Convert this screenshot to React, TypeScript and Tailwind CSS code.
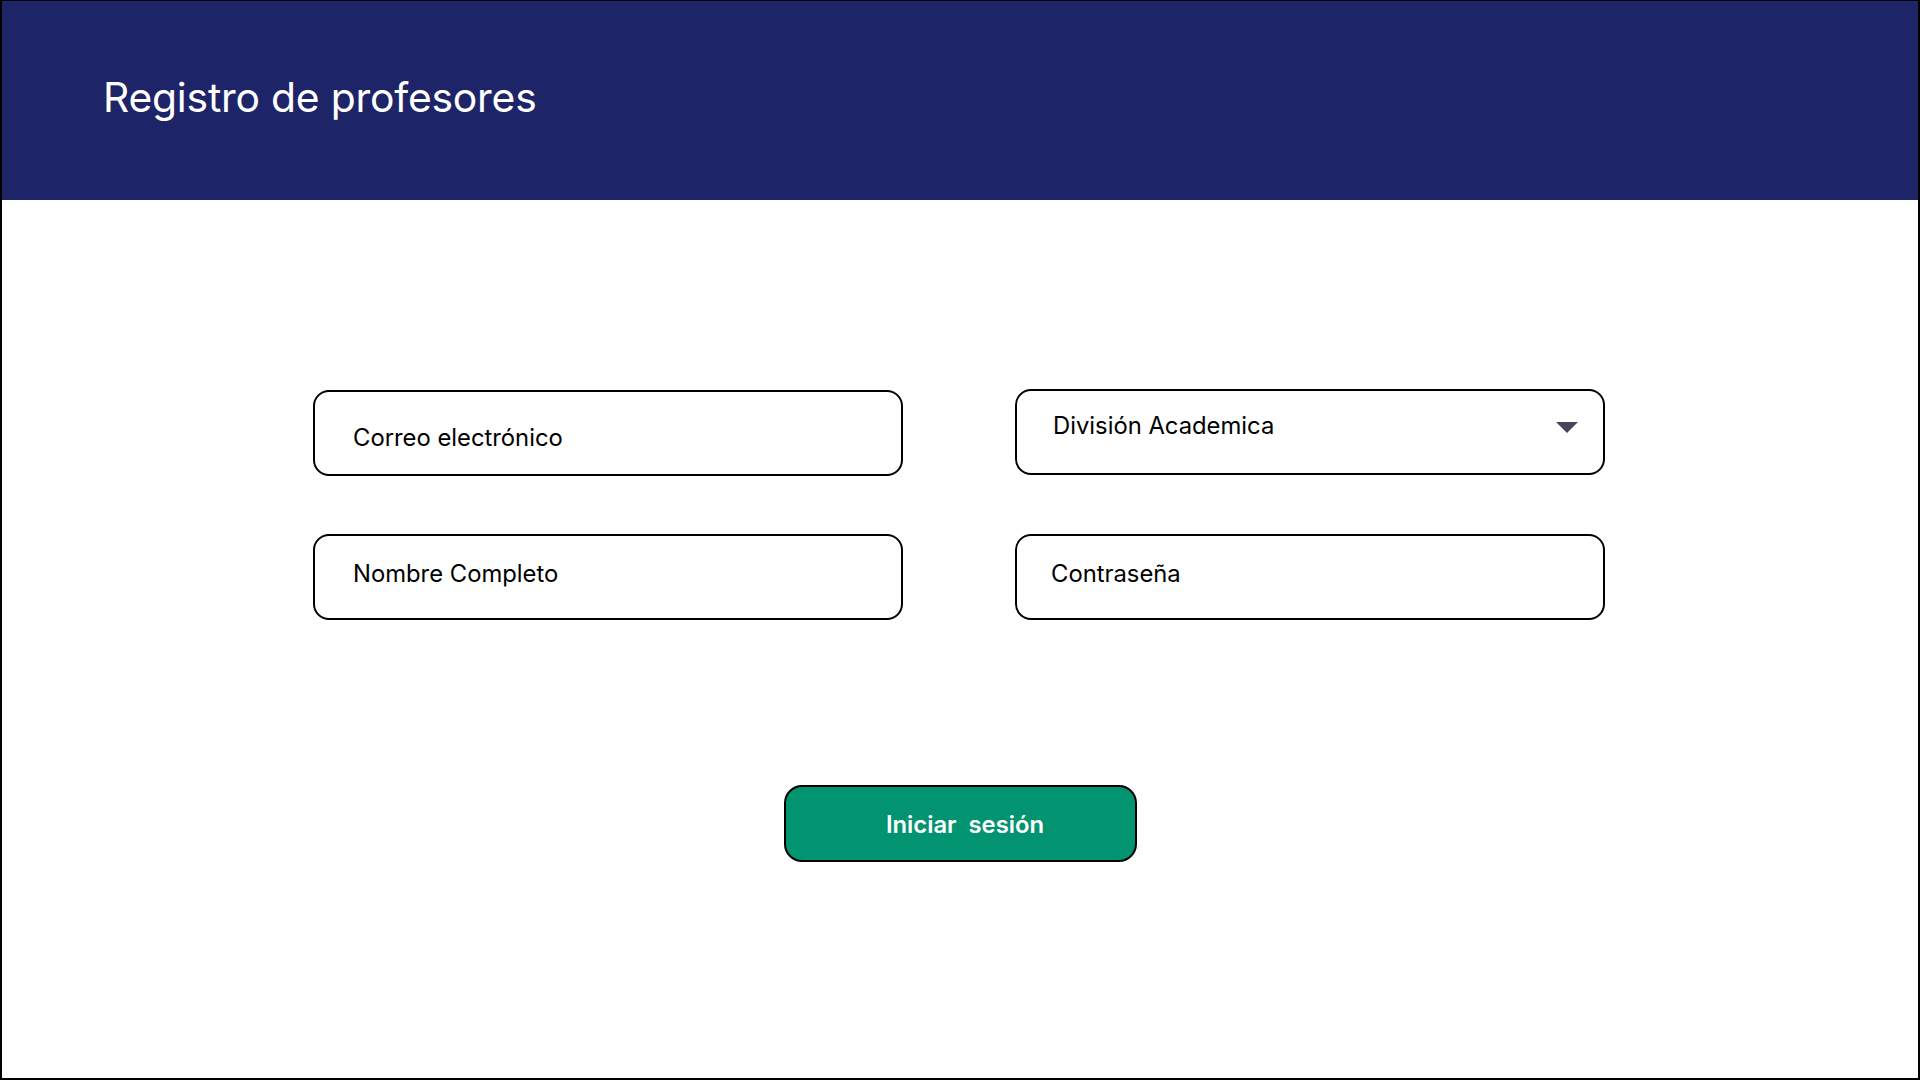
import { useState } from 'react';

const font = { fontFamily: 'Inter, "Noto Sans", sans-serif' };

function Field({
  placeholder,
  type = 'text',
  className = '',
}: {
  placeholder: string;
  type?: string;
  className?: string;
}) {
  const [value, setValue] = useState('');
  return (
    <div className={`h-[86px] rounded-[16px] border-2 border-black bg-white flex items-center ${className}`}>
      <input
        type={type}
        value={value}
        onChange={(e) => setValue(e.target.value)}
        placeholder={placeholder}
        className="w-full bg-transparent outline-none text-[23.8px] text-black placeholder:text-black"
      />
    </div>
  );
}

export default function App() {
  const [division, setDivision] = useState('');

  return (
    <div
      className="h-screen w-full flex flex-col border-2 border-t border-black bg-white overflow-hidden"
      style={font}
    >
      <header className="h-[199px] shrink-0 bg-[#1e2468] flex items-center pl-[101px] pb-[6px]">
        <h1 className="text-[40.8px] text-white tracking-[-0.2px]">Registro de profesores</h1>
      </header>

      <main className="flex-1 flex flex-col items-center pt-[190px]">
        <div className="grid grid-cols-[590px_590px] gap-x-[112px] gap-y-[58px] -translate-x-[1px]">
          <Field placeholder="Correo electrónico" type="email" className="pl-[38px] pt-[10px]" />

          <div className="relative h-[86px] rounded-[16px] border-2 border-black bg-white flex items-center pl-[36px] pb-[12px] -translate-y-[1px]">
            <select
              value={division}
              onChange={(e) => setDivision(e.target.value)}
              className="w-full appearance-none bg-transparent outline-none text-[23.8px] text-black"
            >
              <option value="">División Academica</option>
              <option value="dacb">DACB</option>
              <option value="daci">DACI</option>
            </select>
            <svg
              className="absolute right-[25px] top-[31px] pointer-events-none"
              width="22"
              height="11"
              viewBox="0 0 22 11"
            >
              <path d="M0 0 H22 L11 11 Z" fill="#48455c" />
            </svg>
          </div>

          <Field placeholder="Nombre Completo" className="pl-[38px] pb-[6px]" />
          <Field placeholder="Contraseña" type="password" className="pl-[34px] pb-[6px]" />
        </div>

        <button
          type="button"
          className="mt-[165px] w-[353px] h-[77px] rounded-[18px] border-2 border-black bg-[#029371] text-white text-[23.8px] font-semibold pt-[2px] pl-[10px]"
        >
          Iniciar&nbsp; sesión
        </button>
      </main>
    </div>
  );
}
